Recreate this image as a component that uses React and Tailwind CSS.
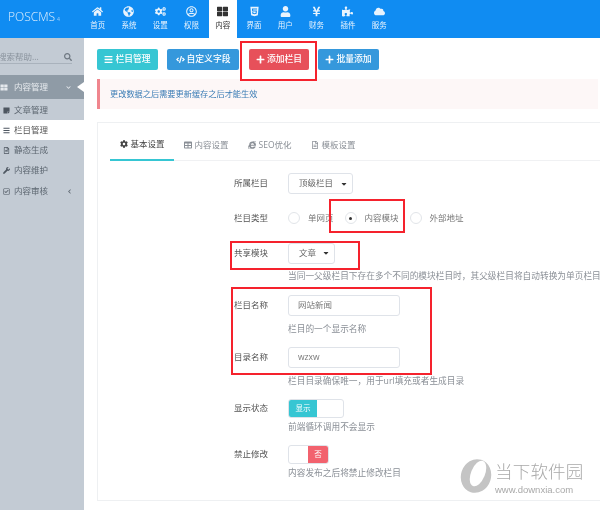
import { FaHome, FaGlobeAmericas, FaCogs, FaRegUserCircle, FaHtml5, FaUser, FaYenSign, FaPuzzlePiece, FaCloud, FaSearch, FaChevronDown, FaChevronLeft, FaBars, FaCode, FaPlus, FaCog, FaTable, FaInternetExplorer, FaRegFileAlt, FaWrench, FaRegCheckSquare, FaStickyNote, FaThLarge, FaCaretDown } from 'react-icons/fa';

const nav = [
  ['首页', FaHome],
  ['系统', FaGlobeAmericas],
  ['设置', FaCogs],
  ['权限', FaRegUserCircle],
  ['内容', FaThLarge, true],
  ['界面', FaHtml5],
  ['用户', FaUser],
  ['财务', FaYenSign],
  ['插件', FaPuzzlePiece],
  ['服务', FaCloud],
];

const subs = [
  ['文章管理', FaStickyNote],
  ['栏目管理', FaBars, true],
  ['静态生成', FaRegFileAlt],
  ['内容维护', FaWrench],
];

const tabs = [
  ['基本设置', FaCog, true],
  ['内容设置', FaTable],
  ['SEO优化', FaInternetExplorer],
  ['模板设置', FaRegFileAlt],
];

function Row({ label, className = '', children }) {
  return (
    <div className={`flex items-center ${className}`}>
      <div className="w-[54px] text-[8.5px] text-[#555]">{label}</div>
      {children}
    </div>
  );
}

function Help({ className = '', children }) {
  return <div className={`ml-[54px] text-[8.7px] leading-[12px] text-[#8a8f96] whitespace-nowrap ${className}`}>{children}</div>;
}

function Select({ width, children }) {
  return (
    <div className={`${width} h-[21px] flex items-center justify-between pl-[10px] pr-[4px] border border-[#dfe3e9] rounded-[3px] text-[8.5px] text-[#666]`}>
      <span>{children}</span>
      <FaCaretDown className="text-[8px] text-[#333]" />
    </div>
  );
}

function Radio({ label, on }) {
  return (
    <div className="flex items-center gap-[8px] text-[8.5px] text-[#777]">
      <span className="w-[12px] h-[12px] rounded-full border border-[#e2e5e9] flex items-center justify-center">
        {on && <span className="w-[3px] h-[3px] rounded-full bg-[#333]" />}
      </span>
      {label}
    </div>
  );
}

function Btn({ color, width, icon: Icon, children }) {
  return (
    <div className={`${color} ${width} h-[21px] rounded-[2px] flex items-center justify-center gap-[2px] text-white text-[8.8px] font-medium whitespace-nowrap`}>
      <Icon className="text-[9px]" />
      {children}
    </div>
  );
}

export default function App() {
  return (
    <div className="relative w-[600px] h-[510px] overflow-hidden bg-white blur-[0.35px] font-['Open_Sans','Noto_Sans_CJK_SC',sans-serif]">
      <header className="h-[38px] bg-[#108cf2] flex">
        <div className="w-[82px] shrink-0 pl-[8px] pt-[8px] text-[12px] text-[#e4f1fd] font-light whitespace-nowrap">
          POSCMS<span className="text-[5px] ml-[2px]">4</span>
        </div>
        {nav.map(([name, Icon, active]) => (
          <div key={name} className={`h-[38px] flex flex-col items-center pt-[6px] gap-[4px] ${active ? 'bg-white text-[#333] w-[28px] mx-[1.6px]' : 'w-[31.3px] text-[#e8f3fd]'}`}>
            <Icon className="text-[11px]" />
            <span className="text-[7.5px] leading-[9px]">{name}</span>
          </div>
        ))}
      </header>

      <div className="flex h-[472px]">
        <aside className="w-[84px] shrink-0 bg-[#c3cbd4] text-[#5c6670] text-[8.5px]">
          <div className="h-[37px] pt-[13px]">
            <div className="h-[13px] mr-[12px] border-b border-[#a9b2bc] flex items-start justify-between whitespace-nowrap text-[#8a939d]">
              <span className="-ml-[2px]">搜索帮助...</span>
              <FaSearch className="text-[8px] mt-[2px] text-[#6f7882]" />
            </div>
          </div>
          <div className="relative h-[24px] bg-[#8f9ba6] flex items-center text-[#e6eaee]">
            <FaThLarge className="text-[7px] w-[14px] -ml-[3px] mr-[3px]" />
            内容管理
            <FaChevronDown className="absolute left-[66px] text-[5px]" />
            <span className="absolute right-0 top-[7px] border-y-[5px] border-y-transparent border-r-[7px] border-r-white" />
          </div>
          <div className="h-[1px]" />
          {subs.map(([name, Icon, active]) => (
            <div key={name} className={`h-[20px] flex items-center ${active ? 'bg-white text-[#555]' : ''}`}>
              <Icon className="text-[7px] w-[9px] ml-[2px] mr-[3px] text-[#4d5660]" />
              {name}
            </div>
          ))}
          <div className="h-[22px] flex items-center relative">
            <FaRegCheckSquare className="text-[7px] w-[9px] ml-[2px] mr-[3px] text-[#4d5660]" />
            内容审核
            <FaChevronLeft className="absolute left-[67px] text-[5px]" />
          </div>
        </aside>

        <main className="flex-1 min-w-0 pl-[13px] pt-[11px] pr-0">
          <div className="flex">
            <Btn color="bg-[#36c6d3]" width="w-[61px]" icon={FaBars}>栏目管理</Btn>
            <div className="ml-[9px]"><Btn color="bg-[#3598dc]" width="w-[72px]" icon={FaCode}>自定义字段</Btn></div>
            <div className="ml-[10px]"><Btn color="bg-[#e7505a]" width="w-[60px]" icon={FaPlus}>添加栏目</Btn></div>
            <div className="ml-[9px]"><Btn color="bg-[#3598dc]" width="w-[61px]" icon={FaPlus}>批量添加</Btn></div>
          </div>

          <div className="mt-[9px] mr-[2px] h-[30px] bg-[#fdf7f7] border-l-[3px] border-l-[#f0868e] pl-[10px] flex items-center text-[8.2px] text-[#3a7cb5] whitespace-nowrap">
            更改数据之后需要更新缓存之后才能生效
          </div>

          <section className="mt-[13px] h-[379px] border border-[#eef0f2] border-r-0 pl-[12px]">
            <div className="h-[38px] border-b border-[#f0f1f3] flex">
              {tabs.map(([name, Icon, active]) => (
                <div key={name} className={`h-[38px] pt-[6px] px-[9.5px] flex items-center gap-[3px] text-[8.5px] whitespace-nowrap ${active ? 'border-b-2 border-b-[#36c6d3] text-[#444]' : 'text-[#8a8f96]'}`}>
                  <Icon className="text-[8px]" />
                  {name}
                </div>
              ))}
            </div>

            <div className="pl-[124px] whitespace-nowrap">
              <Row label="所属栏目" className="mt-[12px]">
                <Select width="w-[65px]">顶级栏目</Select>
              </Row>
              <Row label="栏目类型" className="mt-[18px]">
                <div className="flex gap-[11px]">
                  <Radio label="单网页" />
                  <Radio label="内容模块" on />
                  <Radio label="外部地址" />
                </div>
              </Row>
              <Row label="共享模块" className="mt-[18px]">
                <Select width="w-[47px]">文章</Select>
              </Row>
              <Help className="mt-[6px]">当同一父级栏目下存在多个不同的模块栏目时，其父级栏目将自动转换为单页栏目</Help>
              <Row label="栏目名称" className="mt-[13px]">
                <div className="w-[112px] h-[21px] pl-[9px] flex items-center border border-[#dfe3e9] rounded-[3px] text-[8.5px] text-[#777]">网站新闻</div>
              </Row>
              <Help className="mt-[7px]">栏目的一个显示名称</Help>
              <Row label="目录名称" className="mt-[12px]">
                <div className="w-[112px] h-[21px] pl-[9px] flex items-center border border-[#dfe3e9] rounded-[3px] text-[8.5px] text-[#777]">wzxw</div>
              </Row>
              <Help className="mt-[7px]">栏目目录确保唯一，用于url填充或者生成目录</Help>
              <Row label="显示状态" className="mt-[12px]">
                <div className="w-[56px] h-[19px] flex border border-[#dfe3e9] rounded-[3px] overflow-hidden">
                  <span className="w-[28px] bg-[#36c6d3] text-white text-[7.5px] flex items-center justify-center">显示</span>
                </div>
              </Row>
              <Help className="mt-[3px]">前端循环调用不会显示</Help>
              <Row label="禁止修改" className="mt-[12px]">
                <div className="w-[41px] h-[19px] flex justify-end border border-[#dfe3e9] rounded-[3px] overflow-hidden">
                  <span className="w-[20px] bg-[#f2626e] text-white text-[7.5px] flex items-center justify-center">否</span>
                </div>
              </Row>
              <Help className="mt-[3px]">内容发布之后将禁止修改栏目</Help>
            </div>
          </section>
        </main>
      </div>

      {/* annotation boxes drawn over the screenshot */}
      <div className="absolute left-[240px] top-[41px] w-[77px] h-[40px] border-2 border-[#f5222d]" />
      <div className="absolute left-[329px] top-[199px] w-[76px] h-[34px] border-2 border-[#f5222d]" />
      <div className="absolute left-[230px] top-[241px] w-[130px] h-[29px] border-2 border-[#f5222d]" />
      <div className="absolute left-[231px] top-[287px] w-[201px] h-[88px] border-2 border-[#f5222d]" />

      {/* watermark */}
      <div className="absolute left-[458px] top-[459px] flex items-start gap-[3px] text-[#a9a9a9]">
        <svg width="34" height="36" viewBox="0 0 34 36">
          <ellipse cx="18" cy="17" rx="15" ry="17" transform="rotate(18 18 17)" fill="#c4c4c4" />
          <ellipse cx="20" cy="14.5" rx="7" ry="13.5" transform="rotate(22 20 14.5)" fill="#ffffff" />
        </svg>
        <div className="mt-[2px]">
          <div className="text-[17.5px] leading-[20px] tracking-[0.2px] font-light whitespace-nowrap">当下软件园</div>
          <div className="text-[9.5px] leading-[12px] mt-[3px] font-['Liberation_Sans',sans-serif] whitespace-nowrap">www.downxia.com</div>
        </div>
      </div>
    </div>
  );
}
